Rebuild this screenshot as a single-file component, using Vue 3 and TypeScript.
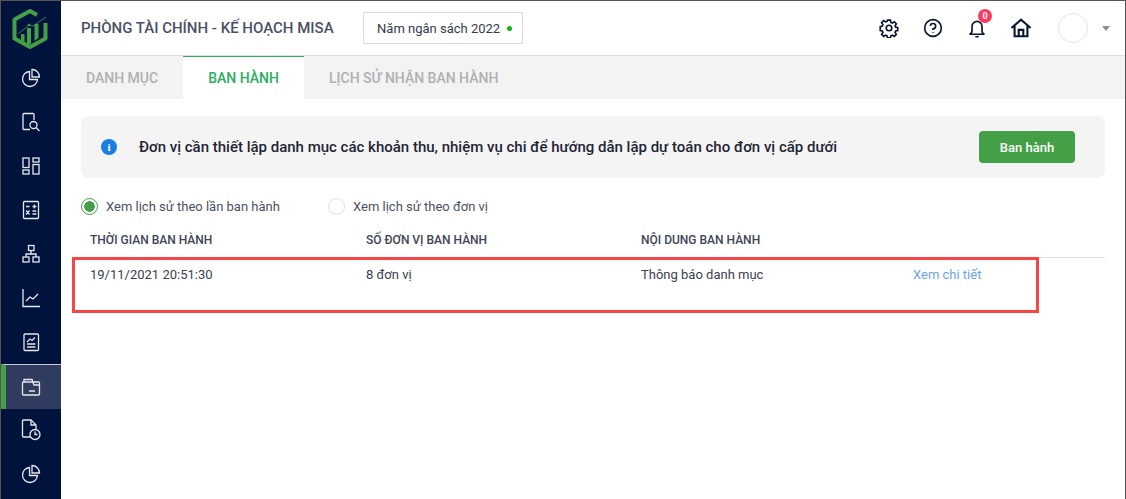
<script setup lang="ts">
const cols = ['THỜI GIAN BAN HÀNH', 'SỐ ĐƠN VỊ BAN HÀNH', 'NỘI DUNG BAN HÀNH']
</script>

<template>
  <div class="frame">
    <aside class="side">
      <svg class="logo" width="36" height="40" viewBox="0 0 36 40">
        <path d="M25 6 18 2 2.500 10.500V29.500L18 38 33.500 29.500V14" fill="none" stroke="#43a047" stroke-width="4" stroke-linejoin="round" />
        <path d="M9 31V25h3.500v8zM15 35V19h4v16zM22.500 32V15h4v14z" fill="#43a047" />
        <path d="M6 25 17 16l4 1 13-9" fill="none" stroke="#5f8f6a" stroke-width=".8" />
        <circle cx="17" cy="16" r="1.300" fill="#43a047" />
      </svg>
      <div class="nav">
        <svg width="20" height="20" viewBox="0 0 20 20"><path d="M8.500 3.500a7.500 7.500 0 1 0 8 8h-8z M11 1.500a7.500 7.500 0 0 1 7.500 7.500H11z" /></svg>
      </div>
      <div class="nav">
        <svg width="20" height="20" viewBox="0 0 20 20"><path d="M9 17.500H3a1 1 0 0 1-1-1V2.500a1 1 0 0 1 1-1h9a1 1 0 0 1 1 1V8" /><circle cx="12.500" cy="13" r="3.500" /><path d="M15 15.500 18.500 19" /></svg>
      </div>
      <div class="nav">
        <svg width="20" height="20" viewBox="0 0 20 20"><rect x="2" y="2" width="6" height="9.500" /><rect x="2" y="14" width="6" height="4" /><rect x="12" y="2" width="6" height="4" /><rect x="12" y="8.500" width="6" height="9.500" /></svg>
      </div>
      <div class="nav">
        <svg width="20" height="20" viewBox="0 0 20 20"><rect x="2.500" y="1.500" width="15" height="17" rx="1" /><path d="M5 6.500h3.500M11.500 6.500h3.800M13.400 4.600v3.800M5 10.500l3.500 4M8.500 10.500l-3.500 4M11.500 11h3.800M11.500 14h3.800" /></svg>
      </div>
      <div class="nav">
        <svg width="20" height="20" viewBox="0 0 20 20"><rect x="7.500" y="1.500" width="5.500" height="5" /><rect x="2" y="13" width="6" height="5" /><rect x="12" y="13" width="6" height="5" /><path d="M10 6.500V10M5 13v-3h10v3" /></svg>
      </div>
      <div class="nav">
        <svg width="20" height="20" viewBox="0 0 20 20"><path d="M2 1v17.500h17" /><path d="M5 13l4-4 3 2 5-5" /></svg>
      </div>
      <div class="nav">
        <svg width="20" height="20" viewBox="0 0 20 20"><rect x="3" y="2" width="14.500" height="16.500" rx="1" /><path d="M6 10l3-3 2 1.500 3-3M6 12h8.500M6 15h8.500" /></svg>
      </div>
      <div class="nav active">
        <svg width="20" height="20" viewBox="0 0 20 20"><path d="M1.500 17V6a1 1 0 0 1 1-1h15a1 1 0 0 1 1 1v11a1 1 0 0 1-1 1h-15a1 1 0 0 1-1-1z" /><path d="M3 5V2.500h8L13 8h5.500M8 14h6" /></svg>
      </div>
      <div class="nav">
        <svg width="20" height="22" viewBox="0 0 20 22"><path d="M9 18H2.500a1 1 0 0 1-1-1V2a1 1 0 0 1 1-1h7.500l5 5v4.500" /><path d="M10 1v5h5" /><circle cx="14" cy="15.500" r="5" /><path d="M14 12.500v3h2.500" /></svg>
      </div>
      <div class="nav">
        <svg width="20" height="20" viewBox="0 0 20 20"><path d="M8.500 3.500a7.500 7.500 0 1 0 8 8h-8z M11 1.500a7.500 7.500 0 0 1 7.500 7.500H11z" /></svg>
      </div>
    </aside>

    <main class="main">
      <header class="top">
        <span class="org">PHÒNG TÀI CHÍNH - KẾ HOẠCH MISA</span>
        <div class="year">Năm ngân sách 2022<i class="dot"></i></div>
        <div class="tools">
          <svg class="tool" width="20" height="20" viewBox="0 0 24 24"><path d="M10.300 2.500h3.400l.6 2.800 1.700.7 2.400-1.500 2.400 2.400-1.500 2.400.7 1.700 2.500.6v3.400l-2.500.6-.7 1.700 1.500 2.400-2.400 2.400-2.400-1.500-1.700.7-.6 2.500h-3.400l-.6-2.500-1.700-.7-2.400 1.500-2.400-2.400 1.500-2.400-.7-1.700-2.500-.6V10.300l2.500-.6.700-1.700-1.500-2.400 2.400-2.400 2.400 1.500 1.700-.7z" /><circle cx="12" cy="12" r="3.300" /></svg>
          <svg class="tool t2" width="20" height="20" viewBox="0 0 24 24"><circle cx="12" cy="12" r="10" /><path d="M8.800 9.500A3.200 3.200 0 1 1 12 13v1.500M12 17v1" /></svg>
          <div class="bell">
            <svg class="tool" width="20" height="20" viewBox="0 0 24 24"><path d="M3 19.500c1.500-.5 3-1.500 3-4V10a6 6 0 0 1 12 0v5.500c0 2.500 1.500 3.500 3 4zM10 22.500h4" /></svg>
            <span class="badge">0</span>
          </div>
          <svg class="tool t4" width="22" height="22" viewBox="0 0 24 24"><path d="M1.500 12 12 3l10.500 9M5 9.500V21h14V9.500M9.500 21v-7h5v7" /></svg>
          <span class="avatar"></span>
          <i class="caret"></i>
        </div>
      </header>

      <nav class="tabs">
        <span class="tab t-a">DANH MỤC</span>
        <span class="tab on">BAN HÀNH</span>
        <span class="tab t-c">LỊCH SỬ NHẬN BAN HÀNH</span>
      </nav>

      <section class="body">
        <div class="card">
          <span class="info">i</span>
          <span class="msg">Đơn vị cần thiết lập danh mục các khoản thu, nhiệm vụ chi để hướng dẫn lập dự toán cho đơn vị cấp dưới</span>
          <button class="btn">Ban hành</button>
        </div>

        <div class="radios">
          <label class="radio r1"><span class="circle sel"></span>Xem lịch sử theo lần ban hành</label>
          <label class="radio"><span class="circle"></span>Xem lịch sử theo đơn vị</label>
        </div>

        <div class="row head">
          <span v-for="c in cols" :key="c">{{ c }}</span>
        </div>
        <div class="row data">
          <span>19/11/2021 20:51:30</span>
          <span>8 đơn vị</span>
          <span>Thông báo danh mục</span>
          <a class="link">Xem chi tiết</a>
        </div>
      </section>
    </main>
    <div class="mark"></div>
  </div>
</template>

<style>
html, body { margin: 0; background: #fff; }
</style>

<style scoped>
.frame {
  position: relative;
  box-sizing: border-box;
  width: 1126px;
  height: 499px;
  display: flex;
  overflow: hidden;
  border: 1px solid #5d5252;
  border-bottom: 0;
  font-family: Roboto, "Noto Sans", sans-serif;
  font-size: 13px;
  color: #2c3444;
}
.side {
  width: 60px;
  flex: none;
  background: #00133d;
  display: flex;
  flex-direction: column;
}
.logo { margin: 8px 0 0 11px; flex: none; }
.nav {
  height: 44px;
  display: flex;
  align-items: center;
  justify-content: center;
  flex: none;
}
.logo + .nav { margin-top: 7px; }
.nav svg {
  fill: none;
  stroke: #e6e8ee;
  stroke-width: 1.3;
}
.nav.active {
  background: #2f3c5f;
  border-top: 1px solid #c9ccd4;
  border-left: 5px solid #43a047;
  box-sizing: border-box;
  height: 45px;
  margin-bottom: -1px;
  padding-right: 5px;
}
.main { flex: 1; min-width: 0; display: flex; flex-direction: column; }
.top {
  height: 55px;
  box-sizing: border-box;
  border-bottom: 1px solid #e0e0e0;
  display: flex;
  align-items: center;
  padding: 0 0 0 20px;
  flex: none;
}
.org { font-size: 15px; font-weight: 500; color: #4a5166; white-space: nowrap; }
.year {
  margin-left: 29px;
  width: 160px;
  height: 32px;
  box-sizing: border-box;
  border: 1px solid #dcdcdc;
  padding-left: 4px;
  display: flex;
  align-items: center;
  justify-content: center;
  font-size: 13px;
  color: #333b4d;
}
.dot { width: 5px; height: 5px; border-radius: 50%; background: #12b312; margin-left: 7px; }
.tools { margin-left: auto; display: flex; align-items: center; padding-right: 15px; }
.tool { fill: none; stroke: #0b1630; stroke-width: 2; display: block; }
.t2 { margin-left: 24px; }
.bell { position: relative; margin-left: 24px; }
.badge {
  position: absolute;
  top: -9px;
  left: 11px;
  width: 14px;
  height: 14px;
  border-radius: 50%;
  background: #ff3b5c;
  color: #fff;
  font-size: 9px;
  font-weight: 700;
  line-height: 14px;
  text-align: center;
}
.t4 { margin-left: 23px; stroke-width: 2.3; }
.avatar {
  margin-left: 26px;
  width: 30px;
  height: 30px;
  border-radius: 50%;
  border: 1px solid #e2e2e2;
  box-sizing: border-box;
}
.caret {
  margin-left: 14px;
  width: 0;
  height: 0;
  border: 4px solid transparent;
  border-top: 5px solid #8d8d99;
  border-bottom: 0;
}
.tabs {
  height: 43px;
  background: #f3f3f3;
  display: flex;
  flex: none;
}
.tab {
  display: flex;
  align-items: center;
  font-size: 14px;
  font-weight: 500;
  color: #b0b0b0;
  white-space: nowrap;
}
.t-a { padding: 0 25px; width: 122px; box-sizing: border-box; }
.tab.on {
  width: 121px;
  justify-content: center;
  background: #fff;
  border-top: 1px solid #27ae60;
  box-sizing: border-box;
  color: #27ae60;
}
.t-c { padding-left: 25px; }
.body { padding: 17px 20px 0; display: flex; flex-direction: column; flex: 1; }
.card {
  height: 62px;
  background: #f4f4f4;
  border-radius: 8px;
  display: flex;
  align-items: center;
  padding: 0 30px 0 20px;
  flex: none;
}
.info {
  width: 16px;
  height: 16px;
  border-radius: 50%;
  background: #1a7fe0;
  color: #fff;
  font: 700 11px/16px "Liberation Serif", serif;
  text-align: center;
  flex: none;
}
.msg { margin-left: 22px; font-size: 15px; font-weight: 500; color: #1f2535; white-space: nowrap; }
.btn {
  margin-left: auto;
  width: 96px;
  height: 32px;
  background: #43a047;
  border: 0;
  border-radius: 4px;
  color: #fff;
  font: 500 13px Roboto, sans-serif;
}
.radios { display: flex; align-items: center; margin-top: 19px; height: 18px; flex: none; color: #4a5162; }
.radio { display: flex; align-items: center; font-size: 13px; }
.r1 { width: 247px; }
.circle {
  width: 17px;
  height: 17px;
  box-sizing: border-box;
  border-radius: 50%;
  border: 1px solid #e0e0e0;
  margin-right: 8px;
  flex: none;
  background: #fff;
}
.circle.sel {
  border-color: #43a047;
  background: radial-gradient(circle, #43a047 0 5px, #fff 5.500px);
}
.row {
  display: grid;
  grid-template-columns: 276px 275px 272px auto;
  padding-left: 9px;
  flex: none;
}
.head {
  margin-top: 17px;
  height: 26px;
  line-height: 16px;
  box-sizing: border-box;
  border-bottom: 1px solid #e0e0e0;
  font-size: 12px;
  font-weight: 500;
  color: #3e4556;
}
.data { padding-top: 9px; font-size: 13px; color: #3a4152; line-height: 16px; }
.link { color: #6ea2ef; }
.mark {
  position: absolute;
  left: 71px;
  top: 256px;
  width: 967px;
  height: 56px;
  box-sizing: border-box;
  border: 3px solid #f84444;
}
</style>
